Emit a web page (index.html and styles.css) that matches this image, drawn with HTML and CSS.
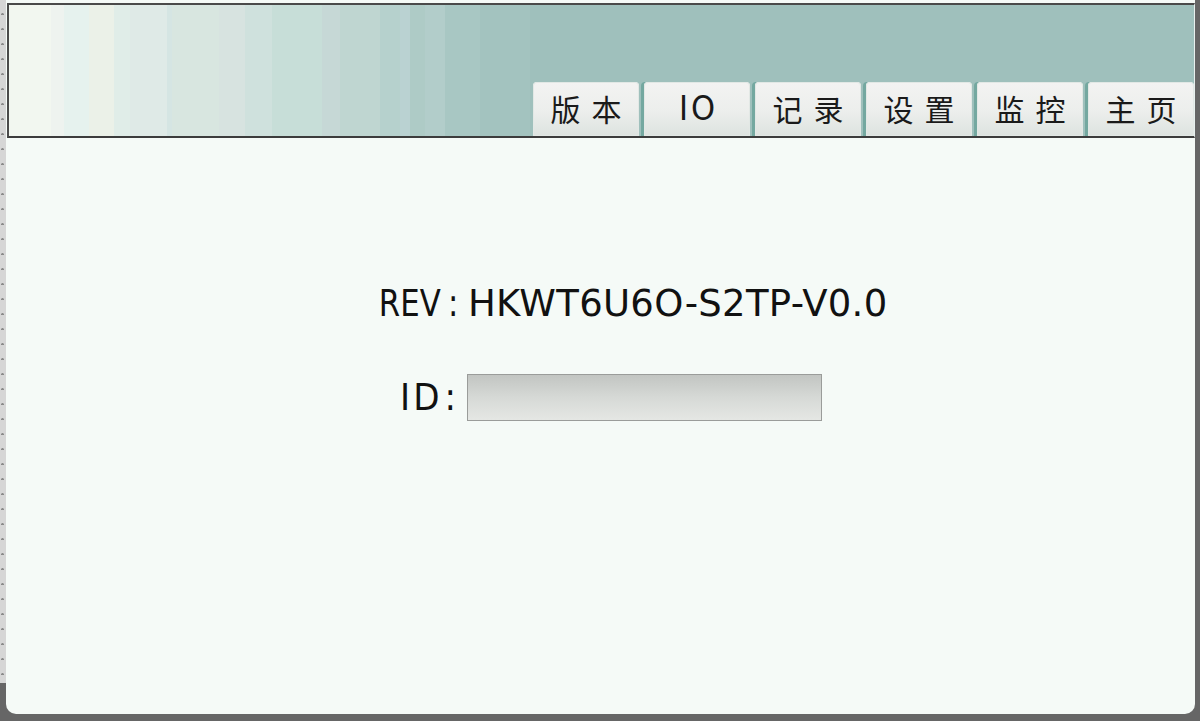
FILE: index.html
```html
<!DOCTYPE html>
<html lang="zh">
<head>
<meta charset="utf-8">
<title>版本</title>
<link rel="stylesheet" href="styles.css">
</head>
<body>
<div class="screen">
  <div class="ruler"></div>
  <div class="panel">
    <header class="header">
      <nav class="tabs">
        <div class="tab">版本</div>
        <div class="tab tab-latin">IO</div>
        <div class="tab">记录</div>
        <div class="tab">设置</div>
        <div class="tab">监控</div>
        <div class="tab">主页</div>
      </nav>
    </header>
    <main class="content">
      <div class="info">
        <div class="label"><span class="label-text">REV<span class="colon">:</span></span></div>
        <div class="value">HKWT6U6O-S2TP-V0.0</div>
        <div class="label label-id"><span class="label-text">ID<span class="colon">:</span></span></div>
        <div class="field"></div>
      </div>
    </main>
  </div>
</div>
</body>
</html>
```
FILE: styles.css
```css
html, body {
  margin: 0;
  padding: 0;
}
body {
  width: 1200px;
  height: 721px;
  overflow: hidden;
  background: #666666;
}
.screen {
  display: flex;
  align-items: flex-start;
  width: 1200px;
  height: 721px;
}
.ruler {
  width: 6px;
  height: 683px;
  background-color: #d6d6d6;
  background-image: radial-gradient(circle at 2.5px 14.5px, #8a8a8a 0 1.2px, transparent 1.6px);
  background-size: 6px 15px;
  background-repeat: repeat-y;
}
.panel {
  width: 1189px;
  height: 714px;
  background: #f5faf7;
  border-radius: 0 0 10px 10px;
  display: flex;
  flex-direction: column;
  padding-top: 3px;
  box-sizing: border-box;
}
.header {
  margin-left: 1px;
  height: 135px;
  box-sizing: border-box;
  border-top: 2px solid #4a4a4a;
  border-left: 2px solid #4a4a4a;
  border-bottom: 2px solid #3c3c3c;
  border-right: 1px solid #e8f0ee;
  display: flex;
  flex-direction: column;
  justify-content: flex-end;
  background: linear-gradient(to right,
    #f2f7f0 0px, #f2f7f0 42px,
    #eef3ef 42px, #eef3ef 55px,
    #e6f2ee 55px, #e6f2ee 80px,
    #ebf1e8 80px, #ebf1e8 105px,
    #e0ede8 105px, #e0ede8 121px,
    #dfeae7 121px, #dfeae7 158px,
    #d5e5e3 158px, #d5e5e3 163px,
    #d8e6e0 163px, #d8e6e0 210px,
    #d7e3e0 210px, #d7e3e0 236px,
    #cfe1dd 236px, #cfe1dd 263px,
    #c7ded8 263px, #c7ded8 313px,
    #c6d8d6 313px, #c6d8d6 331px,
    #bfd6d1 331px, #bfd6d1 371px,
    #b6d1cd 371px, #b6d1cd 391px,
    #bad2d2 391px, #bad2d2 401px,
    #aecbc6 401px, #aecbc6 416px,
    #b2cdca 416px, #b2cdca 436px,
    #a8c7c3 436px, #a8c7c3 471px,
    #a3c3bf 471px, #a3c3bf 521px,
    #9fc0bc 521px, #9fc0bc 100%);
}
.tabs {
  display: flex;
  justify-content: flex-end;
  gap: 5px;
}
.tab {
  width: 106px;
  height: 54px;
  box-sizing: border-box;
  border-radius: 4px 4px 0 0;
  background: linear-gradient(to bottom, #f3f3f2 0%, #eceeec 55%, #dde3e0 100%);
  box-shadow: inset 0 0 0 1px #e2e8e5;
  display: flex;
  align-items: center;
  justify-content: center;
  font-family: "Noto Sans CJK SC", "Noto Sans", sans-serif;
  font-size: 30px;
  letter-spacing: 11px;
  padding-left: 11px;
  padding-bottom: 2px;
  color: #1a1a1a;
}
.tab:nth-child(n+2) {
  box-shadow: inset 0 0 0 1px #e2e8e5, -3px 0 0 #74a8a0;
}
.tab-latin {
  font-family: "DejaVu Sans Condensed", "DejaVu Sans", sans-serif;
  font-size: 34px;
  letter-spacing: 3px;
  padding-left: 3px;
}
.content {
  flex: 1;
  padding-top: 142px;
}
.info {
  display: grid;
  grid-template-columns: 93px auto;
  grid-auto-rows: 47px;
  row-gap: 47px;
  column-gap: 10px;
  margin-left: 359px;
  align-items: center;
  color: #111111;
}
.label {
  font-family: "DejaVu Sans Condensed", "DejaVu Sans", sans-serif;
  font-size: 38px;
  text-align: right;
  line-height: 47px;
}
.label-text {
  display: inline-block;
  transform: scaleX(0.9);
  transform-origin: right center;
}
.colon {
  margin-left: 8px;
}
.label-id .label-text {
  transform: none;
  letter-spacing: 3px;
  margin-right: 2px;
}
.label-id .colon {
  margin-left: 2px;
  letter-spacing: 0;
}
.value {
  font-family: "DejaVu Sans", sans-serif;
  font-size: 37px;
  line-height: 47px;
  letter-spacing: 0.3px;
}
.field {
  width: 355px;
  height: 47px;
  box-sizing: border-box;
  margin-left: -1px;
  border: 1px solid #9a9c9a;
  background: linear-gradient(to bottom, #c2c5c2 0%, #d6d9d6 50%, #e5e7e4 100%);
}
```
